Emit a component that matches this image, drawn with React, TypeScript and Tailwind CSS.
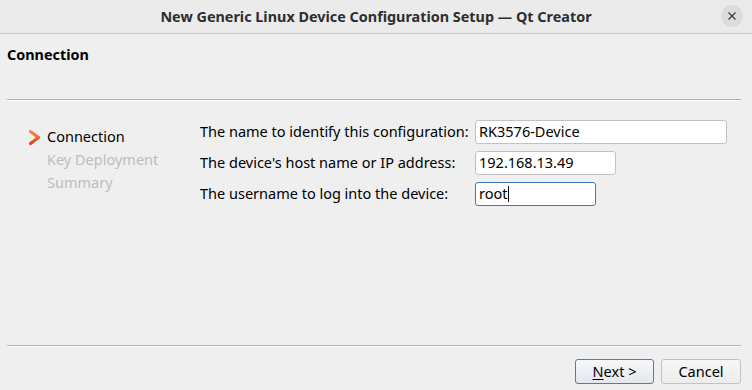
import React from "react";

const steps = [
  { label: "Connection", active: true },
  { label: "Key Deployment", active: false },
  { label: "Summary", active: false },
];

const fields = [
  { label: "The name to identify this configuration:", value: "RK3576-Device", width: "w-[252px]" },
  { label: "The device's host name or IP address:", value: "192.168.13.49", width: "w-[141px]" },
  { label: "The username to log into the device:", value: "root", width: "w-[121px]", focused: true },
];

function Chevron() {
  return (
    <svg width="12" height="15" viewBox="0 0 12 15" className="shrink-0">
      <defs>
        <linearGradient id="chev" x1="0" y1="0" x2="0" y2="1">
          <stop offset="0" stopColor="#f08a4b" />
          <stop offset="1" stopColor="#d9481c" />
        </linearGradient>
      </defs>
      <path d="M1.5 1.5 L9.5 7.5 L1.5 13.5" fill="none" stroke="url(#chev)" strokeWidth="3.2" strokeLinecap="round" strokeLinejoin="round" />
    </svg>
  );
}

export default function App() {
  return (
    <div className="flex h-[390px] w-[752px] flex-col overflow-hidden bg-[#efefef] font-['Noto_Sans',sans-serif] text-[#1a1a1a]">
      {/* Title bar */}
      <header className="relative flex h-[34px] shrink-0 items-center justify-center border-b border-[#c8c8c8] bg-[#ebebeb]">
        <span className="text-[14.4px] font-bold text-[#2e2e2e]">
          New Generic Linux Device Configuration Setup — Qt Creator
        </span>
        <button className="absolute right-[9px] top-[5px] flex h-[22px] w-[22px] items-center justify-center rounded-full bg-[#dcdcdc] text-[#333]">
          <svg width="8" height="8" viewBox="0 0 8 8">
            <path d="M0.5 0.5 L7.5 7.5 M7.5 0.5 L0.5 7.5" stroke="#3a3a3a" strokeWidth="1.2" />
          </svg>
        </button>
      </header>

      {/* Page heading */}
      <div className="px-[7px] pt-[12px]">
        <h1 className="text-[14.4px] font-bold leading-[18px] text-black">Connection</h1>
      </div>

      <div className="ml-[7px] mr-[11px] mt-[35px] h-[2px] border-t border-b border-t-[#b4b4b4] border-b-white" />

      {/* Body */}
      <div className="flex flex-1 pl-[29px] pt-[18px]">
        <ul className="flex w-[171px] flex-col gap-[5px] pt-[9px]">
          {steps.map((s) => (
            <li key={s.label} className="flex h-[18px] items-center">
              <span className="flex w-[18px] items-center">{s.active && <Chevron />}</span>
              <span className={`text-[14.5px] ${s.active ? "text-black" : "text-[#bdbdbd]"}`}>{s.label}</span>
            </li>
          ))}
        </ul>

        <div className="flex flex-col gap-[7px] pt-[1px]">
          {fields.map((f) => (
            <div key={f.label} className="flex h-[24px] items-center">
              <span className="w-[275px] text-[14.5px] text-black">{f.label}</span>
              <div
                className={`flex h-[24px] items-center rounded-[3px] bg-white px-[3px] text-[14.5px] text-black ${f.width} ${
                  f.focused ? "border border-[#3b7bb5]" : "border border-[#c2c2c2]"
                }`}
              >
                {f.value}
                {f.focused && <span className="ml-[1px] h-[16px] w-px bg-black" />}
              </div>
            </div>
          ))}
        </div>
      </div>

      <div className="ml-[7px] mr-[11px] h-[2px] border-t border-b border-t-[#b4b4b4] border-b-white" />

      {/* Buttons */}
      <div className="flex justify-end gap-[7px] pb-[6px] pr-[11px] pt-[12px]">
        <button className="h-[25px] w-[79px] rounded-[3px] border border-[#4d7fab] bg-gradient-to-b from-[#f6f8fa] to-[#e3e8ed] text-[14.5px] text-black">
          <span className="underline underline-offset-[2px]">N</span>ext &gt;
        </button>
        <button className="h-[25px] w-[80px] rounded-[3px] border border-[#c2c2c2] bg-gradient-to-b from-[#f7f7f7] to-[#ececec] text-[14.5px] text-black">
          Cancel
        </button>
      </div>
    </div>
  );
}
